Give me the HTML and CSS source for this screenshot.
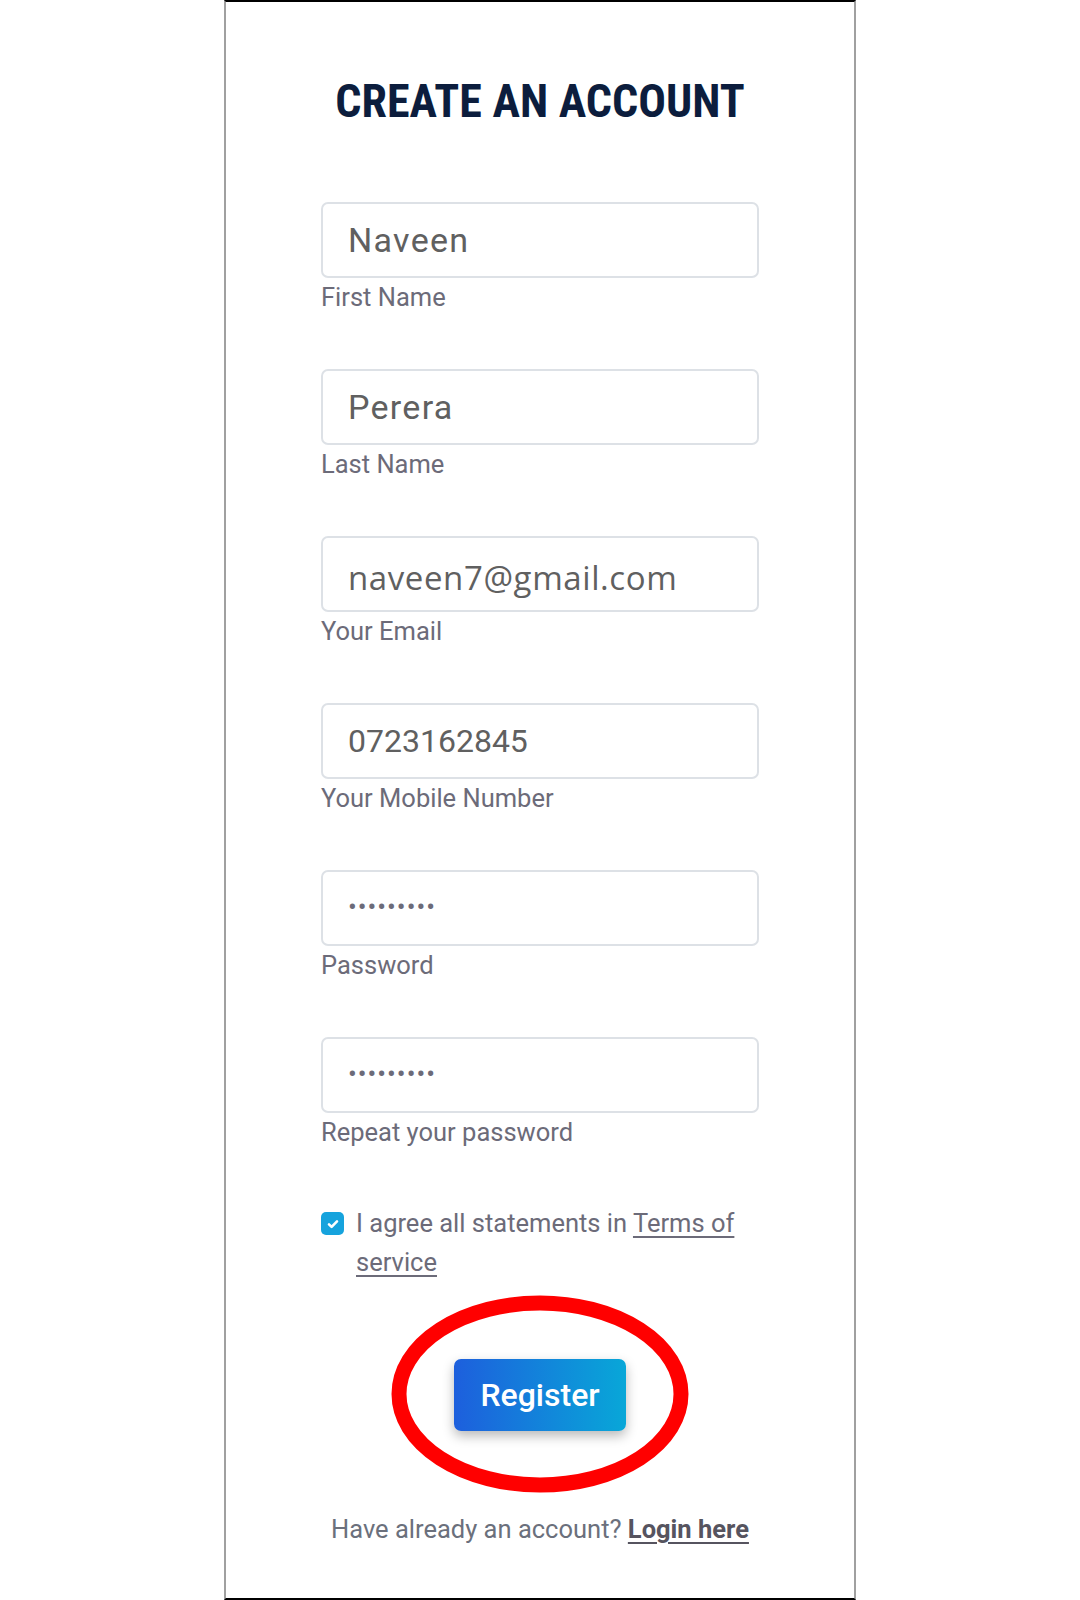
FILE: index.html
```html
<!DOCTYPE html>
<html lang="en">
<head>
    <meta charset="UTF-8">
    <title>Create an account</title>
    <link rel="stylesheet" href="styles.css">
</head>
<body>
    <div class="phone">
        <form class="form">
            <h2 class="title">CREATE AN ACCOUNT</h2>

            <div class="field">
                <input class="input" type="text" value="Naveen" readonly>
                <label class="hint">First Name</label>
            </div>
            <div class="field">
                <input class="input" type="text" value="Perera" readonly>
                <label class="hint">Last Name</label>
            </div>
            <div class="field">
                <input class="input email" type="email" value="naveen7@gmail.com" readonly>
                <label class="hint">Your Email</label>
            </div>
            <div class="field">
                <input class="input tel" type="tel" value="0723162845" readonly>
                <label class="hint">Your Mobile Number</label>
            </div>
            <div class="field">
                <input class="input pass" type="password" value="secret123" readonly>
                <label class="hint">Password</label>
            </div>
            <div class="field">
                <input class="input pass" type="password" value="secret123" readonly>
                <label class="hint">Repeat your password</label>
            </div>

            <div class="agree">
                <span class="check">
                    <svg width="14" height="14" viewBox="0 0 14 14"><path d="M3 7.3l2.6 2.6L11 4.4" fill="none" stroke="#fff" stroke-width="2.6" stroke-linecap="round" stroke-linejoin="round"/></svg>
                </span>
                <p class="agree-text">I agree all statements in <a href="javascript:;">Terms of</a> <a href="javascript:;">service</a></p>
            </div>

            <div class="submit">
                <!-- red mark drawn over the button -->
                <svg class="ring" width="300" height="200" viewBox="0 0 300 200">
                    <ellipse cx="150" cy="100" rx="141" ry="91" fill="none" stroke="#ff0000" stroke-width="15"/>
                </svg>
                <button class="btn" type="button">Register</button>
            </div>

            <p class="login">Have already an account? <a href="javascript:;">Login here</a></p>
        </form>
    </div>
</body>
</html>
```

FILE: styles.css
```css
*{
    margin: 0;
    padding: 0;
    box-sizing: border-box;
}
body{
    background-color: #fff;
    font-family: Roboto, "Liberation Sans", sans-serif;
}
.phone{
    width: 632px;
    height: 1600px;
    margin: 0 auto;
    border-top: 2px solid #000;
    border-bottom: 2px solid #000;
    border-left: 2px solid #a0a0a0;
    border-right: 2px solid #a0a0a0;
    background-color: #fff;
}
.form{
    width: 438px;
    margin: 0 auto;
    padding-top: 70px;
}
.title{
    font-size: 46px;
    font-weight: 700;
    font-stretch: 76%;
    line-height: 58px;
    text-align: center;
    color: #0c1d3d;
    margin-bottom: 72px;
}
.field{
    margin-bottom: 53px;
}
.input{
    display: block;
    width: 100%;
    height: 76px;
    border: 2px solid #dde1e6;
    border-radius: 7px;
    padding: 0 25px;
    font-family: Roboto, sans-serif;
    font-size: 34px;
    letter-spacing: 1.3px;
    color: #606060;
    background: #fff;
    outline: none;
}
.input.email{
    font-family: "Open Sans", sans-serif;
    font-size: 33px;
    letter-spacing: 0.6px;
    padding-top: 6px;
}
.input.tel{
    font-size: 32px;
    letter-spacing: 0;
}
.input.pass{
    font-size: 26px;
    letter-spacing: 1px;
    color: #6c6b79;
    padding-bottom: 2px;
}
.hint{
    display: block;
    font-size: 25.5px;
    line-height: 38px;
    color: #6c6b79;
}
.agree{
    display: flex;
    align-items: flex-start;
    gap: 12px;
    margin-top: 47px;
}
.check{
    flex: none;
    display: flex;
    align-items: center;
    justify-content: center;
    width: 23px;
    height: 23px;
    margin-top: 8px;
    border-radius: 5px;
    background-color: #16a3dd;
}
.agree-text{
    font-size: 25.5px;
    line-height: 39px;
    color: #6c6b79;
}
.agree-text a{
    color: #6c6b79;
    text-decoration: underline;
    text-decoration-thickness: 2px;
    text-underline-offset: 4px;
}
.submit{
    position: relative;
    display: flex;
    justify-content: center;
    margin-top: 77px;
}
.ring{
    position: absolute;
    left: 69px;
    top: -65px;
}
.btn{
    position: relative;
    width: 172px;
    height: 72px;
    border: none;
    border-radius: 7px;
    background: linear-gradient(to right, #1d5fdd, #08a7d8);
    box-shadow: 0 5px 12px rgba(0, 0, 0, 0.28);
    color: #fff;
    font-family: Roboto, sans-serif;
    font-size: 32px;
    font-weight: 500;
}
.login{
    margin-top: 79px;
    text-align: center;
    font-size: 25.5px;
    line-height: 38px;
    color: #6b707c;
}
.login a{
    color: #56545f;
    font-weight: 700;
    text-decoration: underline;
    text-decoration-thickness: 2px;
    text-underline-offset: 4px;
}
```
